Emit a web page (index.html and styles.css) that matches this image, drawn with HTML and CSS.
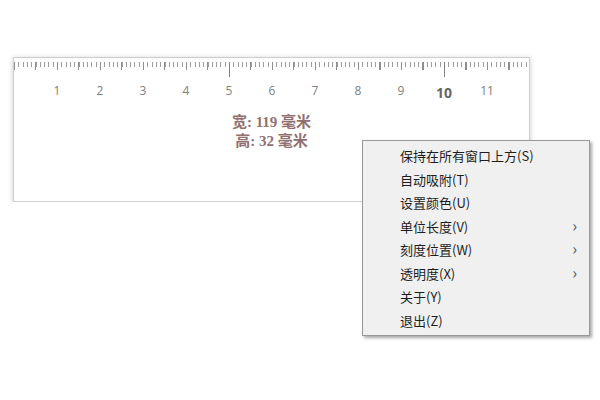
FILE: index.html
```html
<!DOCTYPE html>
<html lang="zh-CN">
<head>
    <meta charset="UTF-8">
    <title>屏幕尺子</title>
    <link rel="stylesheet" href="styles.css">
</head>
<body>
    <div class="ruler">
        <div class="ticks"></div>
        <div class="numbers">
            <span>1</span>
            <span>2</span>
            <span>3</span>
            <span>4</span>
            <span>5</span>
            <span>6</span>
            <span>7</span>
            <span>8</span>
            <span>9</span>
            <span class="big">10</span>
            <span>11</span>
        </div>
        <div class="size">
            <div>宽: 119 毫米</div>
            <div>高: 32 毫米</div>
        </div>
    </div>

    <ul class="menu">
        <li>保持在所有窗口上方(S)</li>
        <li>自动吸附(T)</li>
        <li>设置颜色(U)</li>
        <li class="sub">单位长度(V)</li>
        <li class="sub">刻度位置(W)</li>
        <li class="sub">透明度(X)</li>
        <li>关于(Y)</li>
        <li>退出(Z)</li>
    </ul>
</body>
</html>
```

FILE: styles.css
```css
body {
    margin: 0;
    background: #fff;
    font-family: "Noto Sans CJK SC", sans-serif;
}

.ruler {
    box-sizing: border-box;
    margin: 57px 0 0 13px;
    width: 517px;
    height: 145px;
    background: #fff;
    border: 1px solid #cfcfcf;
    box-shadow: 0 1px 5px rgba(0, 0, 0, 0.22);
    padding-top: 4px;
}

/* ruler marks: 1mm = 4.3px, 0 at the left edge */
.ticks {
    height: 16px;
    background:
        linear-gradient(#808080, #808080) 215px 0 / 1px 15px no-repeat,
        linear-gradient(#808080, #808080) 430px 0 / 1px 15px no-repeat,
        repeating-linear-gradient(to right, #8e8e8e 0 1px, transparent 1px 21.5px) 0 0 / 100% 8px no-repeat,
        repeating-linear-gradient(to right, #9c9c9c 0 1px, transparent 1px 4.3px) 0 0 / 100% 5px no-repeat;
}

.numbers {
    display: flex;
    align-items: baseline;
    padding-left: 21.5px;
    height: 22px;
    margin-top: 2px;
    font-family: "Open Sans", sans-serif;
    font-size: 12px;
    color: #808080;
}

.numbers span {
    width: 43px;
    text-align: center;
}

.numbers .big {
    font-size: 14px;
    font-weight: bold;
    color: #666;
    position: relative;
    top: 3px;
}

.size {
    margin-top: 11px;
    text-align: center;
    font-family: "Liberation Serif", "Noto Sans CJK SC", serif;
    font-weight: bold;
    font-size: 15px;
    line-height: 19px;
    color: #916f6f;
}

.menu {
    position: absolute;
    left: 362px;
    top: 140px;
    box-sizing: border-box;
    width: 228px;
    margin: 0;
    padding: 3px 0;
    list-style: none;
    background: #f0f0f0;
    border: 1px solid #979797;
    box-shadow: 2px 2px 3px rgba(0, 0, 0, 0.35);
}

.menu li {
    height: 23.5px;
    line-height: 23.5px;
    padding-left: 37px;
    font-size: 13px;
    color: #1e1e1e;
    position: relative;
}

.menu .sub::after {
    content: "›";
    position: absolute;
    right: 12px;
    top: -1px;
    font-size: 16px;
    color: #555;
}
```
